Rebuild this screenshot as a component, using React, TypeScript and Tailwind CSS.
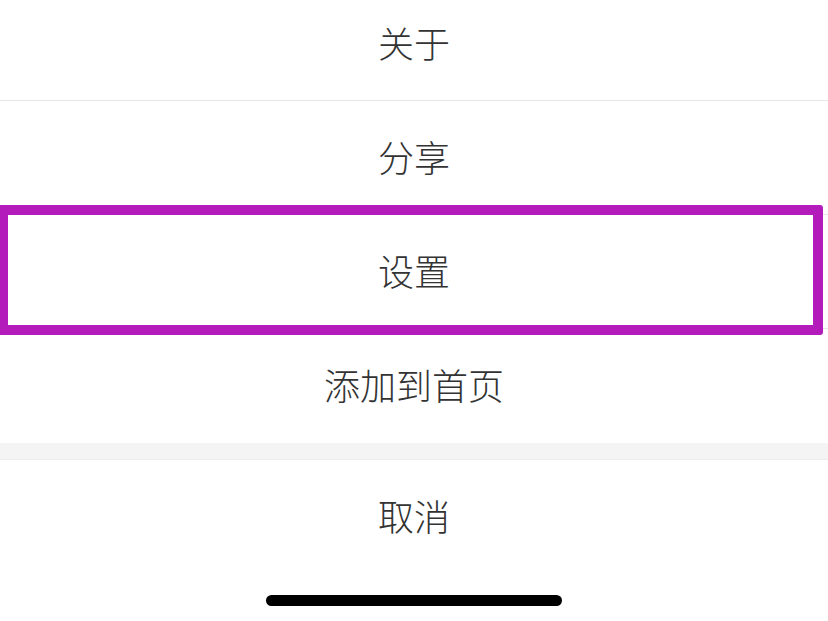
import React from "react";

const font = { fontFamily: '"Noto Sans CJK SC", "Noto Sans", sans-serif' };

function Row({ label, divider = true, className = "" }: { label: string; divider?: boolean; className?: string }) {
  return (
    <div
      className={`flex h-[114px] items-center justify-center bg-white pb-[4px] text-[36px] font-light leading-none text-[#333333] ${
        divider ? "border-b border-[#e6e6e6]" : ""
      } ${className}`}
    >
      {label}
    </div>
  );
}

export default function App() {
  return (
    <div className="relative h-[621px] w-[828px] overflow-hidden bg-white" style={font}>
      <div className="mt-[-13px]">
        <Row label="关于" />
        <Row label="分享" />
        <div className="relative">
          <Row label="设置" />
          <div className="pointer-events-none absolute left-[-2px] top-[-10px] z-10 h-[130px] w-[825px] rounded-[3px] border-[10px] border-[#b31cbb]" />
        </div>
        <Row label="添加到首页" divider={false} />
        <div className="h-[17px] border-b border-[#ececec] bg-[#f4f4f4]" />
        <Row label="取消" divider={false} className="h-[112px]" />
        <div className="flex justify-center pt-[21px]">
          <div className="h-[11px] w-[296px] rounded-full bg-black" />
        </div>
      </div>
    </div>
  );
}
